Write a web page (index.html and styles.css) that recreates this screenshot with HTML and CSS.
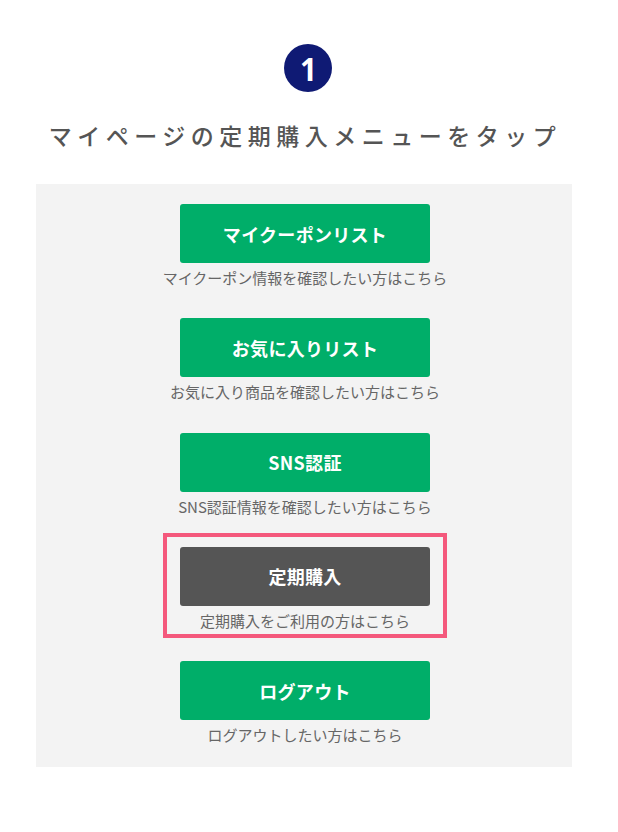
FILE: index.html
```html
<!DOCTYPE html>
<html lang="ja">
<head>
<meta charset="utf-8">
<title>定期購入メニュー</title>
<link rel="stylesheet" href="styles.css">
</head>
<body>
<main class="page">
  <div class="step"><span class="step-num">1</span></div>
  <h1 class="title">マイページの定期購入メニューをタップ</h1>
  <section class="panel">
    <div class="item">
      <div class="btn btn-green">マイクーポンリスト</div>
      <p class="caption">マイクーポン情報を確認したい方はこちら</p>
    </div>
    <div class="item">
      <div class="btn btn-green">お気に入りリスト</div>
      <p class="caption">お気に入り商品を確認したい方はこちら</p>
    </div>
    <div class="item">
      <div class="btn btn-green">SNS認証</div>
      <p class="caption">SNS認証情報を確認したい方はこちら</p>
    </div>
    <div class="item item-highlight">
      <div class="btn btn-dark">定期購入</div>
      <p class="caption">定期購入をご利用の方はこちら</p>
    </div>
    <div class="item">
      <div class="btn btn-green">ログアウト</div>
      <p class="caption">ログアウトしたい方はこちら</p>
    </div>
  </section>
</main>
</body>
</html>
```

FILE: styles.css
```css
html, body {
  margin: 0;
  padding: 0;
  background: #ffffff;
}
body {
  font-family: "Noto Sans CJK JP", "Noto Sans", sans-serif;
  color: #555555;
}
.page {
  width: 608px;
  padding-top: 44px;
  display: flex;
  flex-direction: column;
  align-items: center;
}
.step {
  width: 48px;
  height: 48px;
  border-radius: 50%;
  background: #0f1a74;
  margin-left: 8px;
  display: flex;
  align-items: center;
  justify-content: center;
}
.step-num {
  font-family: "Noto Sans", sans-serif;
  font-weight: 700;
  font-size: 33px;
  line-height: 1;
  color: #ffffff;
  transform: scaleX(0.9);
}
.title {
  margin: 27px 0 0 0;
  padding-left: 2px;
  font-size: 23px;
  line-height: 32px;
  font-weight: 500;
  letter-spacing: 5.5px;
  color: #555555;
  white-space: nowrap;
}
.panel {
  margin-top: 33px;
  width: 536px;
  background: #f3f3f3;
  padding: 20px 0 20px 0;
  display: flex;
  flex-direction: column;
  align-items: center;
  gap: 28.3px;
  box-sizing: border-box;
}
.item {
  position: relative;
  width: 250px;
  margin-left: 2px;
  display: flex;
  flex-direction: column;
  align-items: center;
}
.btn {
  width: 250px;
  height: 59px;
  border-radius: 3px;
  display: flex;
  align-items: center;
  justify-content: center;
  color: #ffffff;
  font-weight: 700;
  font-size: 18px;
  letter-spacing: 0.3px;
}
.btn-green {
  background: #00ae69;
}
.btn-dark {
  background: #555555;
}
.caption {
  margin: 3px 0 0 0;
  font-size: 15px;
  line-height: 24px;
  color: #666666;
  white-space: nowrap;
}
.item-highlight::after {
  content: "";
  position: absolute;
  top: -14px;
  bottom: -5px;
  left: -17px;
  right: -17px;
  border: 4px solid #f4587c;
  pointer-events: none;
}
```
